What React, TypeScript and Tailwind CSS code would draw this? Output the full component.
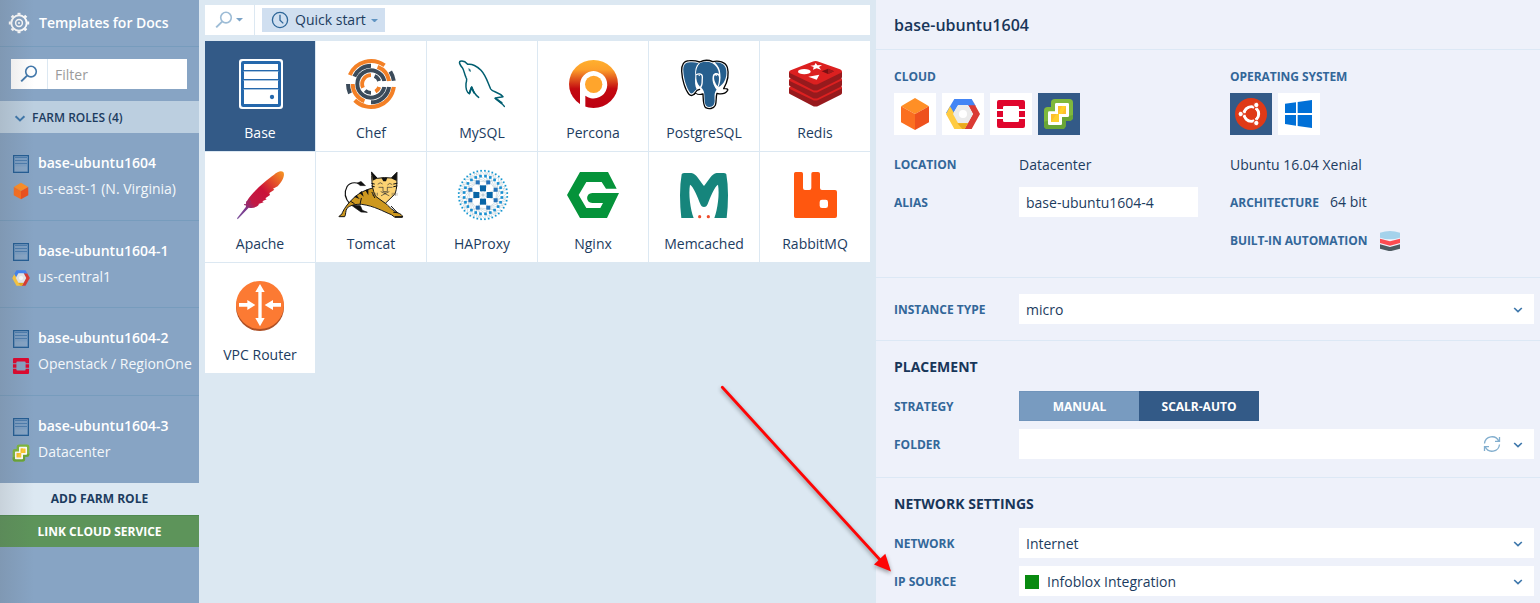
import type { ReactNode } from "react";

/* ---------- helpers ---------- */

function arc(cx: number, cy: number, r: number, from: number, to: number) {
  const rad = Math.PI / 180;
  const x1 = cx + r * Math.cos(from * rad);
  const y1 = cy + r * Math.sin(from * rad);
  const x2 = cx + r * Math.cos(to * rad);
  const y2 = cy + r * Math.sin(to * rad);
  return `M${x1.toFixed(1)} ${y1.toFixed(1)}A${r} ${r} 0 ${to - from > 180 ? 1 : 0} 1 ${x2.toFixed(1)} ${y2.toFixed(1)}`;
}

function ring(count: number, radius: number, offset: number) {
  return Array.from({ length: count }, (_, i) => {
    const a = ((i + offset) / count) * Math.PI * 2;
    return { x: 837 + radius * Math.cos(a), y: 129 + radius * Math.sin(a) };
  });
}

/* ---------- small icons ---------- */

function Gear() {
  return (
    <svg width="22" height="22" viewBox="-11 -11 22 22" fill="none" stroke="#fff">
      <circle r="7.700" strokeWidth="1.900" />
      <circle r="3.400" strokeWidth="1.500" />
      <circle r="1" fill="#fff" stroke="none" />
      {[0, 45, 90, 135, 180, 225, 270, 315].map((a) => (
        <path key={a} d="M-1.500 -9.200H1.500" strokeWidth="2" transform={`rotate(${a})`} />
      ))}
    </svg>
  );
}

function Magnifier({ className }: { className: string }) {
  return (
    <svg width="18" height="18" viewBox="0 0 18 18" fill="none" stroke="currentColor" strokeWidth="1.600" className={className}>
      <circle cx="11" cy="6.600" r="5.300" />
      <path d="M7.100 10.600L1.200 16.400" strokeWidth="2" />
    </svg>
  );
}

function Caret({ className }: { className: string }) {
  return (
    <svg width="7" height="3.500" viewBox="0 0 6 3" className={className}>
      <path d="M0 0H6L3 3Z" fill="currentColor" />
    </svg>
  );
}

function Chevron({ className = "h-[6px] w-[10px]" }: { className?: string }) {
  return (
    <svg viewBox="0 0 10 6" fill="none" stroke="#3f78ac" strokeWidth="1.700" className={className}>
      <path d="M1.200 1L5 4.600L8.800 1" />
    </svg>
  );
}

function RoleIcon() {
  return (
    <svg width="16" height="18" viewBox="0 0 16 18" fill="none">
      <rect x=".6" y=".6" width="14.800" height="16.800" fill="#7c9fc4" stroke="#235d94" strokeWidth="1.300" />
      <rect x="2" y="11.500" width="12" height="4.500" fill="#86a5c6" />
      <path d="M2 2.500H14M2 5.500H14M2 8.500H14" stroke="#4d7dae" strokeWidth="1" />
    </svg>
  );
}

function Aws() {
  return (
    <g>
      <path d="M117 114L159 139L117 162L75 139Z" fill="#ff8f26" />
      <path d="M75 139L117 162V210L75 187Z" fill="#fb6f20" />
      <path d="M159 139L117 162V210L159 187Z" fill="#ee511d" />
    </g>
  );
}

function Gcp() {
  return (
    <g>
      <path d="M235 117H287L299 138H245L230 162L210 159Z" fill="#4385f5" />
      <path d="M287 117L312 162L287 207H265L291 162L277 136H298Z" fill="#da3b34" />
      <path d="M222 139L236 162L249 189H276L266 207H235L210 162Z" fill="#ffcb42" />
      <path d="M244 190H276L266 207H259Z" fill="#eaa91d" />
      <path d="M246 135H276L291 162L276 189H246L231 162Z" fill="#ebebeb" />
      <circle cx="261" cy="162" r="12" fill="#fff" />
    </g>
  );
}

function Openstack() {
  return (
    <g fill="#e0062d">
      <path d="M363 147V126Q363 120 369 120H441Q447 120 447 126V147H429V142Q429 138 425 138H385Q381 138 381 142V147Z" />
      <path d="M363 153H381V171H363ZM429 153H447V171H429Z" />
      <path d="M363 177V198Q363 204 369 204H441Q447 204 447 198V177H429V182Q429 186 425 186H385Q381 186 381 182V177Z" />
    </g>
  );
}

function Vmware() {
  return (
    <g>
      <path d="M537 117H580Q591 117 591 128V171Q591 182 580 182H569V196Q569 207 558 207H515Q504 207 504 196V152Q504 141 515 141H525V128Q525 117 537 117Z" fill="#7fb83c" />
      <path d="M504 185L591 165V171Q591 182 580 182H569V196Q569 207 558 207H515Q504 207 504 196Z" fill="#69a536" />
      <path d="M541 129H575Q579 129 579 133V167Q579 171 575 171H558V191Q558 195 554 195H520Q516 195 516 191V158Q516 154 520 154H537V133Q537 129 541 129Z" fill="#fff" />
      <path d="M546 138H570V162H549V186H525V162H546Z" fill="#ffd02e" />
      <path d="M546 138H558L546 162ZM558 162L570 138V162ZM525 186V162L541 162Z" fill="#fdbf2d" />
    </g>
  );
}

/* ---------- application logos ---------- */

function BaseLogo() {
  return (
    <svg width="110" height="80" viewBox="3 3 330 240">
      <rect x="105" y="57" width="132" height="150" rx="9" fill="#fff" />
      <rect x="115.500" y="67.500" width="111" height="129" rx="2" fill="#fff" stroke="#2568ac" strokeWidth="9" />
      <path d="M119 91.500H223M119 118.500H223M119 145.500H223" stroke="#2568ac" strokeWidth="3" />
      <path d="M119 94.500H223M119 121.500H223M119 148.500H223" stroke="#a9c5df" strokeWidth="3" />
      <circle cx="204" cy="171" r="6.500" fill="#2568ac" />
    </svg>
  );
}

const chefArcs: [number, number, number, string, number][] = [
  [69, 203, 306, "#f38026", 12],
  [69, 7, 135, "#f38026", 12],
  [69, 156, 180, "#3b4b5a", 12],
  [69, 327, 352, "#3b4b5a", 12],
  [55, 204, 270, "#3b4b5a", 12],
  [55, 291, 351, "#f38026", 12],
  [55, 9, 90, "#3b4b5a", 12],
  [55, 111, 180, "#f38026", 12],
  [41, 12, 348, "#3b4b5a", 12],
  [26.5, 155, 270, "#f38026", 11.5],
  [26.5, 294, 340, "#3b4b5a", 11.5],
  [26.5, 20, 60, "#f38026", 11.5],
  [26.5, 90, 132, "#3b4b5a", 11.5],
];

function ChefLogo() {
  return (
    <svg width="110" height="80" viewBox="336 3 330 240" fill="none">
      {chefArcs.map(([r, from, to, color, w], i) => (
        <path key={i} d={arc(501, 132, r, from, to)} stroke={color} strokeWidth={w} />
      ))}
      <rect x="522" y="124" width="58" height="16" fill="#fff" />
    </svg>
  );
}

function MysqlLogo() {
  return (
    <svg width="110" height="80" viewBox="669 3 330 240" fill="none" stroke="#005e70" strokeLinejoin="round" strokeLinecap="round">
      <path
        d="M824 172C812 163 807 155 803 141C799 147 799 154 796 161C788 157 785 144 786 131C787 122 791 119 786 112C781 103 781 92 775 83C769 76 763 66 769 64C776 62 785 66 791 73C803 70 820 79 831 91C846 107 850 125 860 147C865 156 885 156 897 170C889 172 879 172 874 175C881 184 892 187 901 199"
        strokeWidth="4.500"
      />
      <path d="M796 160L803 142L810 158M874 175L893 188" strokeWidth="5.500" />
      <path d="M795 86Q801 88 799 95L796 92Z" strokeWidth="1.500" fill="#005e70" />
    </svg>
  );
}

function PerconaLogo() {
  return (
    <svg width="110" height="80" viewBox="0 3 330 240">
      <defs>
        <linearGradient id="percona" x1="0" y1="0" x2="0" y2="1">
          <stop offset="0" stopColor="#ffb02e" />
          <stop offset=".2" stopColor="#fda02b" />
          <stop offset=".6" stopColor="#c30a10" />
          <stop offset="1" stopColor="#bd0012" />
        </linearGradient>
      </defs>
      <ellipse cx="166.500" cy="132" rx="73.500" ry="72" fill="url(#percona)" />
      <path d="M126 210V130A41 41 0 1 1 142 167V210Z" fill="#fff" />
      <circle cx="167" cy="133" r="26" fill="#ffa52c" />
    </svg>
  );
}

function PostgresLogo() {
  return (
    <svg width="110" height="80" viewBox="333 3 330 240" strokeLinejoin="round" strokeLinecap="round">
      <path
        d="M455 62C437 62 430 75 431 94C432 119 442 150 453 163C461 171 468 163 473 158C479 164 487 164 495 162C496 180 495 197 503 203C512 208 527 207 532 196C536 185 533 172 537 160C548 163 562 161 569 151C571 146 564 146 557 146C567 128 574 103 568 82C563 66 541 60 524 65C513 60 497 60 485 66C474 62 464 61 455 62Z"
        fill="#fff"
        stroke="#050505"
        strokeWidth="4"
      />
      <path
        d="M456 67C441 67 435 76 436 94C437 116 446 146 457 159C463 164 469 154 476 148C471 139 470 125 472 108C470 91 473 78 482 70C473 67 464 66 456 67Z"
        fill="#265f8e"
      />
      <path
        d="M487 68C477 77 474 89 474 102C487 97 496 102 495 112C494 126 496 133 490 143C501 153 499 165 500 184C501 196 505 201 512 201C526 202 530 193 530 181C530 166 528 158 536 149C525 135 521 119 525 105C529 98 538 98 543 102C542 87 534 76 522 69C511 64 498 65 487 68Z"
        fill="#265f8e"
      />
      <path d="M530 67C541 78 547 88 547 102C549 117 546 131 541 142C559 132 567 112 565 92C564 73 546 65 530 67Z" fill="#265f8e" />
      <path d="M475 106C486 101 492 105 491 113C490 126 492 132 486 140C477 132 474 119 475 106ZM529 107C537 101 543 106 543 113C543 124 542 130 539 139C532 130 526 117 529 107Z" fill="#265f8e" />
      <path d="M480 104L487 104L484 109ZM532 104L539 104L534 109Z" fill="#fff" />
      <path d="M472 156C476 151 482 149 491 152C493 158 482 161 474 156M538 153C545 157 555 154 562 151" fill="none" stroke="#fff" strokeWidth="5" />
      <path d="M468 163L477 151L485 148" fill="none" stroke="#050505" strokeWidth="3.500" />
    </svg>
  );
}

function RedisLogo() {
  return (
    <svg width="110" height="80" viewBox="666 3 330 240">
      {[48, 24, 0].map((dy) => (
        <g key={dy} transform={`translate(0 ${dy})`}>
          <path d="M753 96V110Q753 113 757 115L823 149Q832 154 842 149L908 116Q912 114 912 111V95Z" fill="#971a1d" />
          <path d="M753 96Q754 92 760 90L823 65Q833 61 842 65L906 88Q912 91 912 95Q911 98 906 100L842 131Q832 136 823 131L760 101Q755 99 753 96Z" fill="#dc2020" />
        </g>
      ))}
      <ellipse cx="799" cy="95" rx="19" ry="8" fill="#fff" />
      <path d="M833 69L838 76L852 75L843 81L849 89L836 85L825 89L827 81L817 77L829 76Z" fill="#fff" />
      <path d="M811 110L844 104L836 119Z" fill="#fff" />
      <path d="M851 94L870 86L888 94L870 102Z" fill="#7b1013" />
      <path d="M870 86L888 94L870 102Z" fill="#a51a1d" />
    </svg>
  );
}

function ApacheLogo() {
  return (
    <svg width="110" height="80" viewBox="3 0 330 240">
      <defs>
        <linearGradient id="feather" x1="1" y1="0" x2="0" y2="1">
          <stop offset="0" stopColor="#f79a23" />
          <stop offset=".22" stopColor="#e4502a" />
          <stop offset=".42" stopColor="#cb1238" />
          <stop offset=".66" stopColor="#c01a45" />
          <stop offset=".8" stopColor="#79378b" />
          <stop offset="1" stopColor="#8058a0" />
        </linearGradient>
      </defs>
      <path d="M238 60C231 54 220 59 210 68C188 83 160 108 142 129C130 143 122 155 126 164L99 199L101 202L134 167C145 170 157 167 166 157L161 157L179 151L175 148L188 142L184 139L198 129L196 123L211 113L207 110L221 103C235 88 244 71 238 60Z" fill="url(#feather)" />
      <path d="M120 158L129 158L128 149L134 154L134 143L141 149" fill="none" stroke="#9a2b69" strokeWidth="3" />
    </svg>
  );
}

function TomcatLogo() {
  return (
    <svg width="110" height="80" viewBox="336 0 330 240" strokeLinejoin="round" strokeLinecap="round">
      <path d="M439 157C423 140 420 120 429 104C438 91 451 90 466 95" fill="none" stroke="#111" strokeWidth="3.500" />
      <path d="M460 93L471 88L485 101L469 101Z" fill="#111" stroke="#111" />
      <path d="M441 158L469 161L475 175L490 181L471 180L454 168Z" fill="#111" stroke="#111" strokeWidth="2" />
      <path
        d="M406 192C409 187 414 190 415 182C422 166 435 151 450 137C465 123 485 113 506 108L540 149C555 164 568 179 587 185C595 189 596 193 595 196H573L562 188C537 178 511 162 473 157C454 156 437 160 429 169C424 176 426 188 422 194H406Z"
        fill="#cd9820"
        stroke="#151515"
        strokeWidth="3"
      />
      <path d="M466 122L479 134L474 117ZM484 115L493 130L493 111ZM451 135L467 141L457 129Z" fill="#111" />
      <path d="M472 139L468 157M504 121L512 137M440 148L451 155" stroke="#111" strokeWidth="3" />
      <path d="M562 163L580 182L569 181M574 194H596" fill="none" stroke="#111" strokeWidth="3" />
      <path d="M503 61L520 79Q541 75 562 78L579 61C578 83 581 109 572 127L544 154L515 133C505 116 503 89 503 61Z" fill="#fdd372" stroke="#151515" strokeWidth="3" />
      <path d="M503 60L521 79L506 86ZM579 60L561 79L578 87ZM532 77H550L546 88H538Z" fill="#111" />
      <path d="M503 94L511 96M503 102L511 104M579 94L569 96M579 102L569 104" stroke="#111" strokeWidth="3" />
      <path d="M522 96Q529 88 535 95M551 98Q557 90 564 97M525 106H536M551 106H564M537 106V119H550V106M531 119L555 131M555 119L532 131M543 120V125" fill="none" stroke="#333" strokeWidth="2" />
      <path d="M504 127H523M563 127H580" stroke="#5b5345" strokeWidth="9" strokeLinecap="butt" strokeDasharray="3 2" opacity=".55" />
    </svg>
  );
}

const outerDots = ring(40, 73, 0.5);
const midDots = ring(24, 57, 0.5);
const innerDots = ring(8, 41, 0.5);
const coreDots = ring(4, 20, 0);

function HaproxyLogo() {
  return (
    <svg width="110" height="80" viewBox="669 0 330 240">
      <g stroke="#789bad" strokeWidth=".9" fill="none">
        {outerDots.map((p, i) => {
          const q = midDots[Math.floor((i * 24) / 40)];
          const n = midDots[(Math.floor((i * 24) / 40) + 1) % 24];
          return <path key={i} d={`M${q.x} ${q.y}L${p.x} ${p.y}L${n.x} ${n.y}`} />;
        })}
        {midDots.map((p, i) => {
          const q = innerDots[Math.floor(i / 3)];
          const n = innerDots[(Math.floor(i / 3) + 1) % 8];
          return <path key={i} d={`M${q.x} ${q.y}L${p.x} ${p.y}L${n.x} ${n.y}`} />;
        })}
        {innerDots.map((p, i) => {
          const c = coreDots[Math.floor((i + 1) / 2) % 4];
          return <path key={i} d={`M${c.x} ${c.y}L${p.x} ${p.y}L837 129`} />;
        })}
      </g>
      {outerDots.map((p, i) => <rect key={i} x={p.x - 2.5} y={p.y - 2.5} width="5" height="5" fill="#1598d2" />)}
      {midDots.map((p, i) => <rect key={i} x={p.x - 4} y={p.y - 4} width="8" height="8" fill="#1b91d2" />)}
      {innerDots.map((p, i) => <rect key={i} x={p.x - 6} y={p.y - 6} width="12" height="12" fill="#2673ba" />)}
      {coreDots.map((p, i) => <rect key={i} x={p.x - 9} y={p.y - 9} width="18" height="18" fill="#0865a6" />)}
    </svg>
  );
}

function NginxLogo() {
  return (
    <svg width="110" height="80" viewBox="0 0 330 240">
      <path
        d="M126 60H210L236 110H204L191 90H145L122 129L145 168H187L195 153H163C142 153 142 123 163 123H243L207 198H126L87 129Z"
        fill="#05933a"
      />
    </svg>
  );
}

function MemcachedLogo() {
  return (
    <svg width="110" height="80" viewBox="333 0 330 240">
      <path
        d="M430 198Q426 165 426 130Q426 95 431 67Q433 63 440 63H460C475 65 483 84 498 102C513 84 521 65 536 63H556Q563 63 565 67Q570 95 570 130Q570 165 566 198H529C539 172 545 125 540 98C530 102 516 139 509 156Q506 165 498 165Q490 165 487 156C480 139 466 102 456 98C451 125 457 172 467 198Z"
        fill="#16857c"
      />
      <circle cx="485" cy="194" r="4.800" fill="#ee4b2b" />
      <circle cx="511" cy="194" r="4.800" fill="#ee4b2b" />
    </svg>
  );
}

function RabbitLogo() {
  return (
    <svg width="110" height="80" viewBox="666 0 330 240">
      <path
        fillRule="evenodd"
        d="M768 65Q768 60 773 60H790Q795 60 795 65V108Q795 114 801 114H814Q820 114 820 108V65Q820 60 825 60H840Q846 60 846 65V108Q846 114 852 114H891Q897 114 897 120V192Q897 198 891 198H773Q768 198 768 193ZM852 143Q845 143 845 150V161Q845 168 852 168H863Q870 168 870 161V150Q870 143 863 143Z"
        fill="#ff570f"
      />
    </svg>
  );
}

function RouterLogo() {
  return (
    <svg width="110" height="80" viewBox="3 3 330 240">
      <circle cx="168" cy="135" r="72" fill="#ad4f25" />
      <circle cx="168" cy="129" r="72" fill="#fc7a33" />
      <g fill="#fff">
        <path d="M168 66L182 90H173V168H182L168 193L154 168H163V90H154Z" />
        <path d="M105 123H130V114L154 129L130 144V134H105Z" />
        <path d="M231 123H207V114L182 129L207 144V134H231Z" />
      </g>
    </svg>
  );
}

/* ---------- data ---------- */

const apps: { name: string; logo: ReactNode }[] = [
  { name: "Base", logo: <BaseLogo /> },
  { name: "Chef", logo: <ChefLogo /> },
  { name: "MySQL", logo: <MysqlLogo /> },
  { name: "Percona", logo: <PerconaLogo /> },
  { name: "PostgreSQL", logo: <PostgresLogo /> },
  { name: "Redis", logo: <RedisLogo /> },
  { name: "Apache", logo: <ApacheLogo /> },
  { name: "Tomcat", logo: <TomcatLogo /> },
  { name: "HAProxy", logo: <HaproxyLogo /> },
  { name: "Nginx", logo: <NginxLogo /> },
  { name: "Memcached", logo: <MemcachedLogo /> },
  { name: "RabbitMQ", logo: <RabbitLogo /> },
  { name: "VPC Router", logo: <RouterLogo /> },
];

const roles = [
  { name: "base-ubuntu1604", place: "us-east-1 (N. Virginia)", box: "69 110 96 104", icon: <Aws /> },
  { name: "base-ubuntu1604-1", place: "us-central1", box: "209 112 104 100", icon: <Gcp /> },
  { name: "base-ubuntu1604-2", place: "Openstack / RegionOne", box: "358 115 94 94", icon: <Openstack /> },
  { name: "base-ubuntu1604-3", place: "Datacenter", box: "502 115 91 94", icon: <Vmware /> },
];

const clouds = [
  { id: "aws", box: "54 99 126 126", icon: <Aws />, on: false },
  { id: "gcp", box: "198 99 126 126", icon: <Gcp />, on: false },
  { id: "openstack", box: "342 99 126 126", icon: <Openstack />, on: false },
  { id: "vmware", box: "486 99 126 126", icon: <Vmware />, on: true },
];

/* ---------- building blocks ---------- */

function Label({ children, className = "w-[125px] pt-[2px]" }: { children: ReactNode; className?: string }) {
  return <span className={`shrink-0 text-[12px] font-bold leading-5 text-[#336799] ${className}`}>{children}</span>;
}

function Title({ children }: { children: ReactNode }) {
  return <h2 className="h-5 text-[14px] font-bold leading-5 text-[#183659]">{children}</h2>;
}

function Field({ label, children, className = "" }: { label: string; children?: ReactNode; className?: string }) {
  return (
    <div className={`flex h-[30px] items-center ${className}`}>
      <Label>{label}</Label>
      <div className="flex h-[30px] w-[515px] items-center bg-white pt-[2px] pr-[11px] pl-[7px]">
        <div className="flex flex-1 items-center">{children}</div>
        <Chevron />
      </div>
    </div>
  );
}

/* ---------- page ---------- */

export default function App() {
  return (
    <div className="relative flex h-[603px] w-[1540px] overflow-hidden bg-[#dce8f2] font-['Open_Sans',sans-serif] text-[14px] leading-5 text-[#1c3c60]">
      <aside className="relative h-full w-[199px] shrink-0 bg-[#87a4c4] text-white">
        <header className="flex h-[47px] items-center gap-[9px] border-b border-[#779cbd] pl-2 font-semibold tracking-[-0.03px]">
          <Gear />
          <span>Templates for Docs</span>
        </header>
        <div className="h-[54px] px-[11px] pt-3">
          <div className="flex h-[30px] w-[176px] bg-white">
            <div className="flex w-[37px] items-center justify-center border-r border-[#dce8f2]">
              <Magnifier className="text-[#4278ab]" />
            </div>
            <span className="pt-[6px] pl-[7px] text-[#9b9b9b]">Filter</span>
          </div>
        </div>
        <div className="flex h-8 items-center gap-[6px] bg-[#bccfe0] pt-[2px] pl-[14px] text-[12px] font-semibold text-[#1c3c60]">
          <Chevron className="h-[7px] w-3" />
          FARM ROLES (4)
        </div>
        {roles.map((role, i) => (
          <div key={role.name} className={`h-[87.5px] pt-5 pl-3 ${i < 3 ? "border-b border-[#779cbd]" : ""}`}>
            <div className="flex h-5 items-center gap-[9px] pl-px font-semibold">
              <div className="pt-[2px]"><RoleIcon /></div>
              <span>{role.name}</span>
            </div>
            <div className="mt-[6px] flex h-5 items-center gap-[8px] whitespace-nowrap text-[#f3f7fa]">
              <svg width="18" height="18" viewBox={role.box} className="mt-[3px]">{role.icon}</svg>
              <span>{role.place}</span>
            </div>
          </div>
        ))}
        <div className="flex h-8 items-center justify-center bg-[#dce8f2] text-[12px] font-bold text-[#1c3c60]">ADD FARM ROLE</div>
        <div className="flex h-8 items-center justify-center border-t border-[#4f8a50] bg-[#5d945a] pt-px text-[12px] font-bold">LINK CLOUD SERVICE</div>
        <div className="pointer-events-none absolute inset-y-0 left-0 w-[34px] bg-gradient-to-r from-[#55555526] to-[#55555500]" />
      </aside>

      <main className="h-full w-[677px] shrink-0 px-[6px] pt-[5px]">
        <div className="flex h-[30px] bg-white">
          <div className="flex w-[50px] items-center gap-[3px] border-r border-[#dce8f2] pl-[10px]">
            <Magnifier className="text-[#9dbcd6]" />
            <Caret className="text-[#7ba3c7]" />
          </div>
          <div className="mt-[3px] ml-[7px] flex h-6 w-[123px] items-center bg-[#d0dff0] pl-[9px]">
            <svg width="18" height="18" viewBox="0 0 18 18" fill="none" stroke="#2e6698" strokeWidth="1.300">
              <circle cx="9" cy="9" r="7.600" />
              <path d="M9 3.800V9.200L12.300 12.400" />
            </svg>
            <span className="ml-[6px]">Quick start</span>
            <Caret className="mt-px ml-[5px] text-[#6094c2]" />
          </div>
        </div>
        <div className="mt-[6px] grid w-[665px] grid-cols-[repeat(6,110px)] gap-px">
          {apps.map((app, i) => (
            <div key={app.name} className={`flex h-[110px] flex-col items-center ${i === 0 ? "bg-[#335a87] text-white" : "bg-white"}`}>
              {app.logo}
              <span className="mt-[2px]">{app.name}</span>
            </div>
          ))}
        </div>
      </main>

      <section className="h-full w-[664px] shrink-0 bg-[#eef1fa]">
        <header className="flex h-[50px] items-center border-b border-[#dce8f5] pl-[18px] text-[16px] font-semibold text-[#183659]">
          base-ubuntu1604
        </header>
        <div className="flex h-[228px] border-b border-[#dce8f5] pt-[17px] pl-[18px]">
          <div className="w-[336px]">
            <Label className="block">CLOUD</Label>
            <div className="mt-[6px] flex gap-[6px]">
              {clouds.map((c) => (
                <div key={c.id} className={`h-[42px] w-[42px] ${c.on ? "bg-[#335a87]" : "bg-white"}`}>
                  <svg width="42" height="42" viewBox={c.box}>{c.icon}</svg>
                </div>
              ))}
            </div>
            <div className="mt-5 flex h-5 items-center">
              <Label className="w-[125px]">LOCATION</Label>
              <span>Datacenter</span>
            </div>
            <div className="mt-3 flex h-[30px] items-center">
              <Label>ALIAS</Label>
              <div className="flex h-[30px] w-[179px] items-center bg-white pt-[2px] pl-[7px]">base-ubuntu1604-4</div>
            </div>
          </div>
          <div>
            <Label className="block tracking-[-0.05px]">OPERATING SYSTEM</Label>
            <div className="mt-[6px] flex gap-[6px]">
              <div className="h-[42px] w-[42px] bg-[#335a87]">
                <svg width="42" height="42" viewBox="66 99 126 126">
                  <circle cx="129" cy="162" r="48" fill="#df3a17" />
                  <circle cx="130" cy="162" r="22" fill="none" stroke="#fff" strokeWidth="9" />
                  <path d="M130 162L99 162M130 162L145 136M130 162L145 188" stroke="#df3a17" strokeWidth="4" />
                  <circle cx="130" cy="162" r="17" fill="#df3a17" />
                  <g fill="#fff" stroke="#df3a17" strokeWidth="3">
                    <circle cx="98" cy="162" r="8" />
                    <circle cx="145" cy="135" r="8" />
                    <circle cx="145" cy="189" r="8" />
                  </g>
                </svg>
              </div>
              <div className="h-[42px] w-[42px] bg-white">
                <svg width="42" height="42" viewBox="210 99 126 126" fill="#0070d7">
                  <path d="M231 131L264 127V159H231ZM269 126L312 120V159H269ZM231 165H264V197L231 192ZM269 165H312V204L269 198Z" />
                </svg>
              </div>
            </div>
            <div className="mt-5 h-5">Ubuntu 16.04 Xenial</div>
            <div className="mt-3 flex h-[30px] items-center">
              <Label className="w-[100px] pt-[2px]">ARCHITECTURE</Label>
              <span>64 bit</span>
            </div>
            <div className="mt-2 flex h-[30px] items-center">
              <Label className="w-[149px] pt-[2px] tracking-[-0.1px]">BUILT-IN AUTOMATION</Label>
              <svg width="22" height="22" viewBox="513 507 66 66">
                <path d="M516 518Q546 508 576 518V533Q546 543 516 533Z" fill="#a4d2eb" />
                <path d="M516 536L546 544L576 536V549L546 557L516 549Z" fill="#fc4b50" />
                <path d="M516 553L546 561L576 553V566L546 574L516 566Z" fill="#4d5a60" />
              </svg>
            </div>
          </div>
        </div>
        <div className="h-[63px] border-b border-[#dce8f5] pt-4 pl-[18px]">
          <Field label="INSTANCE TYPE">micro</Field>
        </div>
        <div className="h-[137px] border-b border-[#dce8f5] pt-4 pl-[18px]">
          <Title>PLACEMENT</Title>
          <div className="mt-[14px] flex h-[30px] items-center">
            <Label>STRATEGY</Label>
            <div className="flex h-[30px] w-[240px] text-center text-[12px] leading-[30px] font-bold text-white">
              <div className="w-[120px] border border-r-0 border-[#7094bb] bg-[#789bc0] pt-px leading-7">MANUAL</div>
              <div className="w-[120px] bg-[#335a87] pt-px">SCALR-AUTO</div>
            </div>
          </div>
          <Field label="FOLDER" className="mt-2">
            <svg width="18" height="18" viewBox="0 0 18 18" fill="none" stroke="#82aece" strokeWidth="1.300" className="-mt-[2px] mr-3 ml-auto">
              <path d="M1.500 8.500A7.500 7.500 0 0 1 15.800 6.200M16.500 2V6.400H12M16.500 9.500A7.500 7.500 0 0 1 2.200 11.800M1.500 16V11.600H6" />
            </svg>
          </Field>
        </div>
        <div className="pt-4 pl-[18px]">
          <Title>NETWORK SETTINGS</Title>
          <Field label="NETWORK" className="mt-[14px]">Internet</Field>
          <Field label="IP SOURCE" className="mt-2">
            <span className="mr-2 -ml-px h-[14px] w-[14px] bg-[#088a10]" />
            Infoblox Integration
          </Field>
        </div>
      </section>

      <svg width="190" height="203" viewBox="710 376 190 203" className="pointer-events-none absolute top-[376px] left-[710px] drop-shadow-[0_2px_2px_rgba(0,0,0,0.4)]">
        <path d="M722.300 387.300L882 562" stroke="#fe0505" strokeWidth="2.800" strokeLinecap="round" />
        <path d="M891 571.500L874 564.500L885.300 553.800Z" fill="#fe0505" />
      </svg>
    </div>
  );
}
